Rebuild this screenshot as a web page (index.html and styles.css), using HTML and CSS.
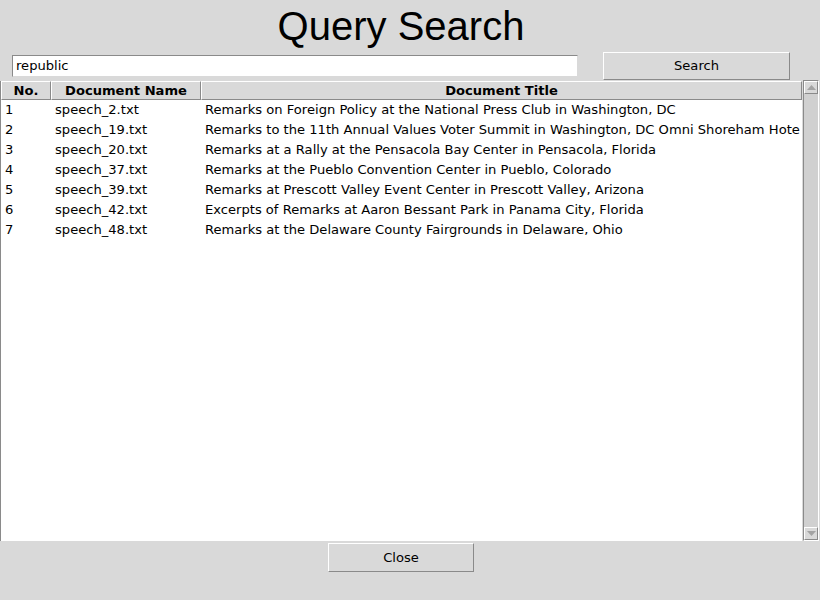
FILE: index.html
```html
<!DOCTYPE html>
<html>
<head>
<meta charset="utf-8">
<link rel="stylesheet" href="styles.css">
</head>
<body>
<div class="app">
  <h1 class="title">Query Search</h1>
  <div class="searchbar">
    <div class="entry">republic</div>
    <div class="btn search-btn">Search</div>
  </div>
  <div class="results">
    <div class="tree">
      <div class="thead">
        <div class="th c-no">No.</div>
        <div class="th c-name">Document Name</div>
        <div class="th c-title">Document Title</div>
      </div>
      <div class="tbody">
        <div class="tr"><div class="td c-no">1</div><div class="td c-name">speech_2.txt</div><div class="td c-title">Remarks on Foreign Policy at the National Press Club in Washington, DC</div></div>
        <div class="tr"><div class="td c-no">2</div><div class="td c-name">speech_19.txt</div><div class="td c-title">Remarks to the 11th Annual Values Voter Summit in Washington, DC Omni Shoreham Hote</div></div>
        <div class="tr"><div class="td c-no">3</div><div class="td c-name">speech_20.txt</div><div class="td c-title">Remarks at a Rally at the Pensacola Bay Center in Pensacola, Florida</div></div>
        <div class="tr"><div class="td c-no">4</div><div class="td c-name">speech_37.txt</div><div class="td c-title">Remarks at the Pueblo Convention Center in Pueblo, Colorado</div></div>
        <div class="tr"><div class="td c-no">5</div><div class="td c-name">speech_39.txt</div><div class="td c-title">Remarks at Prescott Valley Event Center in Prescott Valley, Arizona</div></div>
        <div class="tr"><div class="td c-no">6</div><div class="td c-name">speech_42.txt</div><div class="td c-title">Excerpts of Remarks at Aaron Bessant Park in Panama City, Florida</div></div>
        <div class="tr"><div class="td c-no">7</div><div class="td c-name">speech_48.txt</div><div class="td c-title">Remarks at the Delaware County Fairgrounds in Delaware, Ohio</div></div>
      </div>
    </div>
    <div class="scrollbar">
      <div class="arrow up"><svg width="9" height="5" viewBox="0 0 9 5"><path d="M0 5 L4.5 0 L9 5 Z" fill="#a3a3a3"/></svg></div>
      <div class="trough"></div>
      <div class="arrow down"><svg width="9" height="5" viewBox="0 0 9 5"><path d="M0 0 L4.5 5 L9 0 Z" fill="#a3a3a3"/></svg></div>
    </div>
  </div>
  <div class="footer">
    <div class="btn close-btn">Close</div>
  </div>
</div>
</body>
</html>
```
FILE: styles.css
```css
html, body {
  margin: 0;
  padding: 0;
  background: #d9d9d9;
}
body {
  width: 820px;
  height: 600px;
  overflow: hidden;
  font-family: "DejaVu Sans", sans-serif;
  font-size: 13.1px;
  color: #000;
}
.app {
  display: flex;
  flex-direction: column;
  height: 600px;
}
.title {
  margin: 0;
  height: 52px;
  font-family: "Liberation Sans", Arial, sans-serif;
  font-weight: normal;
  font-size: 40px;
  line-height: 52px;
  text-align: center;
  padding-right: 18px;
}
.searchbar {
  display: flex;
  align-items: center;
  height: 28px;
  padding-left: 12px;
}
.entry {
  box-sizing: border-box;
  width: 566px;
  height: 22px;
  background: #fff;
  border: 1px solid;
  border-color: #8a8a8a #d9d9d9 #d9d9d9 #8a8a8a;
  line-height: 20px;
  padding-left: 3px;
}
.btn {
  box-sizing: border-box;
  background: #d9d9d9;
  border: 1px solid;
  border-color: #ffffff #8a8a8a #8a8a8a #ffffff;
  text-align: center;
}
.search-btn {
  margin-left: 25px;
  width: 187px;
  height: 28px;
  line-height: 26px;
}
.results {
  display: flex;
  height: 461px;
}
.tree {
  box-sizing: border-box;
  width: 802px;
  margin-top: 1px;
  background: #fff;
  border-left: 1px solid #8a8a8a;
  overflow: hidden;
}
.thead {
  display: flex;
  height: 19px;
  background: #d9d9d9;
}
.th {
  box-sizing: border-box;
  height: 19px;
  font-weight: bold;
  text-align: center;
  line-height: 17px;
  border: 1px solid;
  border-color: #ffffff #8a8a8a #8a8a8a #ffffff;
  overflow: hidden;
}
.c-no { width: 50px; flex: none; }
.c-name { width: 150px; flex: none; }
.c-title { flex: 1; }
.tr {
  display: flex;
  height: 20px;
  white-space: nowrap;
}
.td {
  box-sizing: border-box;
  height: 20px;
  line-height: 20px;
  padding-left: 4px;
  overflow: hidden;
}
.scrollbar {
  box-sizing: border-box;
  width: 16px;
  margin-left: 1px;
  height: 461px;
  display: flex;
  flex-direction: column;
  border: 1px solid;
  border-color: #8a8a8a #ffffff #ffffff #8a8a8a;
}
.arrow {
  box-sizing: border-box;
  height: 13px;
  border: 1px solid;
  border-color: #ffffff #8a8a8a #8a8a8a #ffffff;
  display: flex;
  align-items: center;
  justify-content: center;
}
.trough {
  flex: 1;
  background: #d0d0d0;
}
.footer {
  display: flex;
  justify-content: center;
  padding-top: 2px;
}
.close-btn {
  width: 146px;
  height: 29px;
  line-height: 27px;
  margin-left: -18px;
}
```
